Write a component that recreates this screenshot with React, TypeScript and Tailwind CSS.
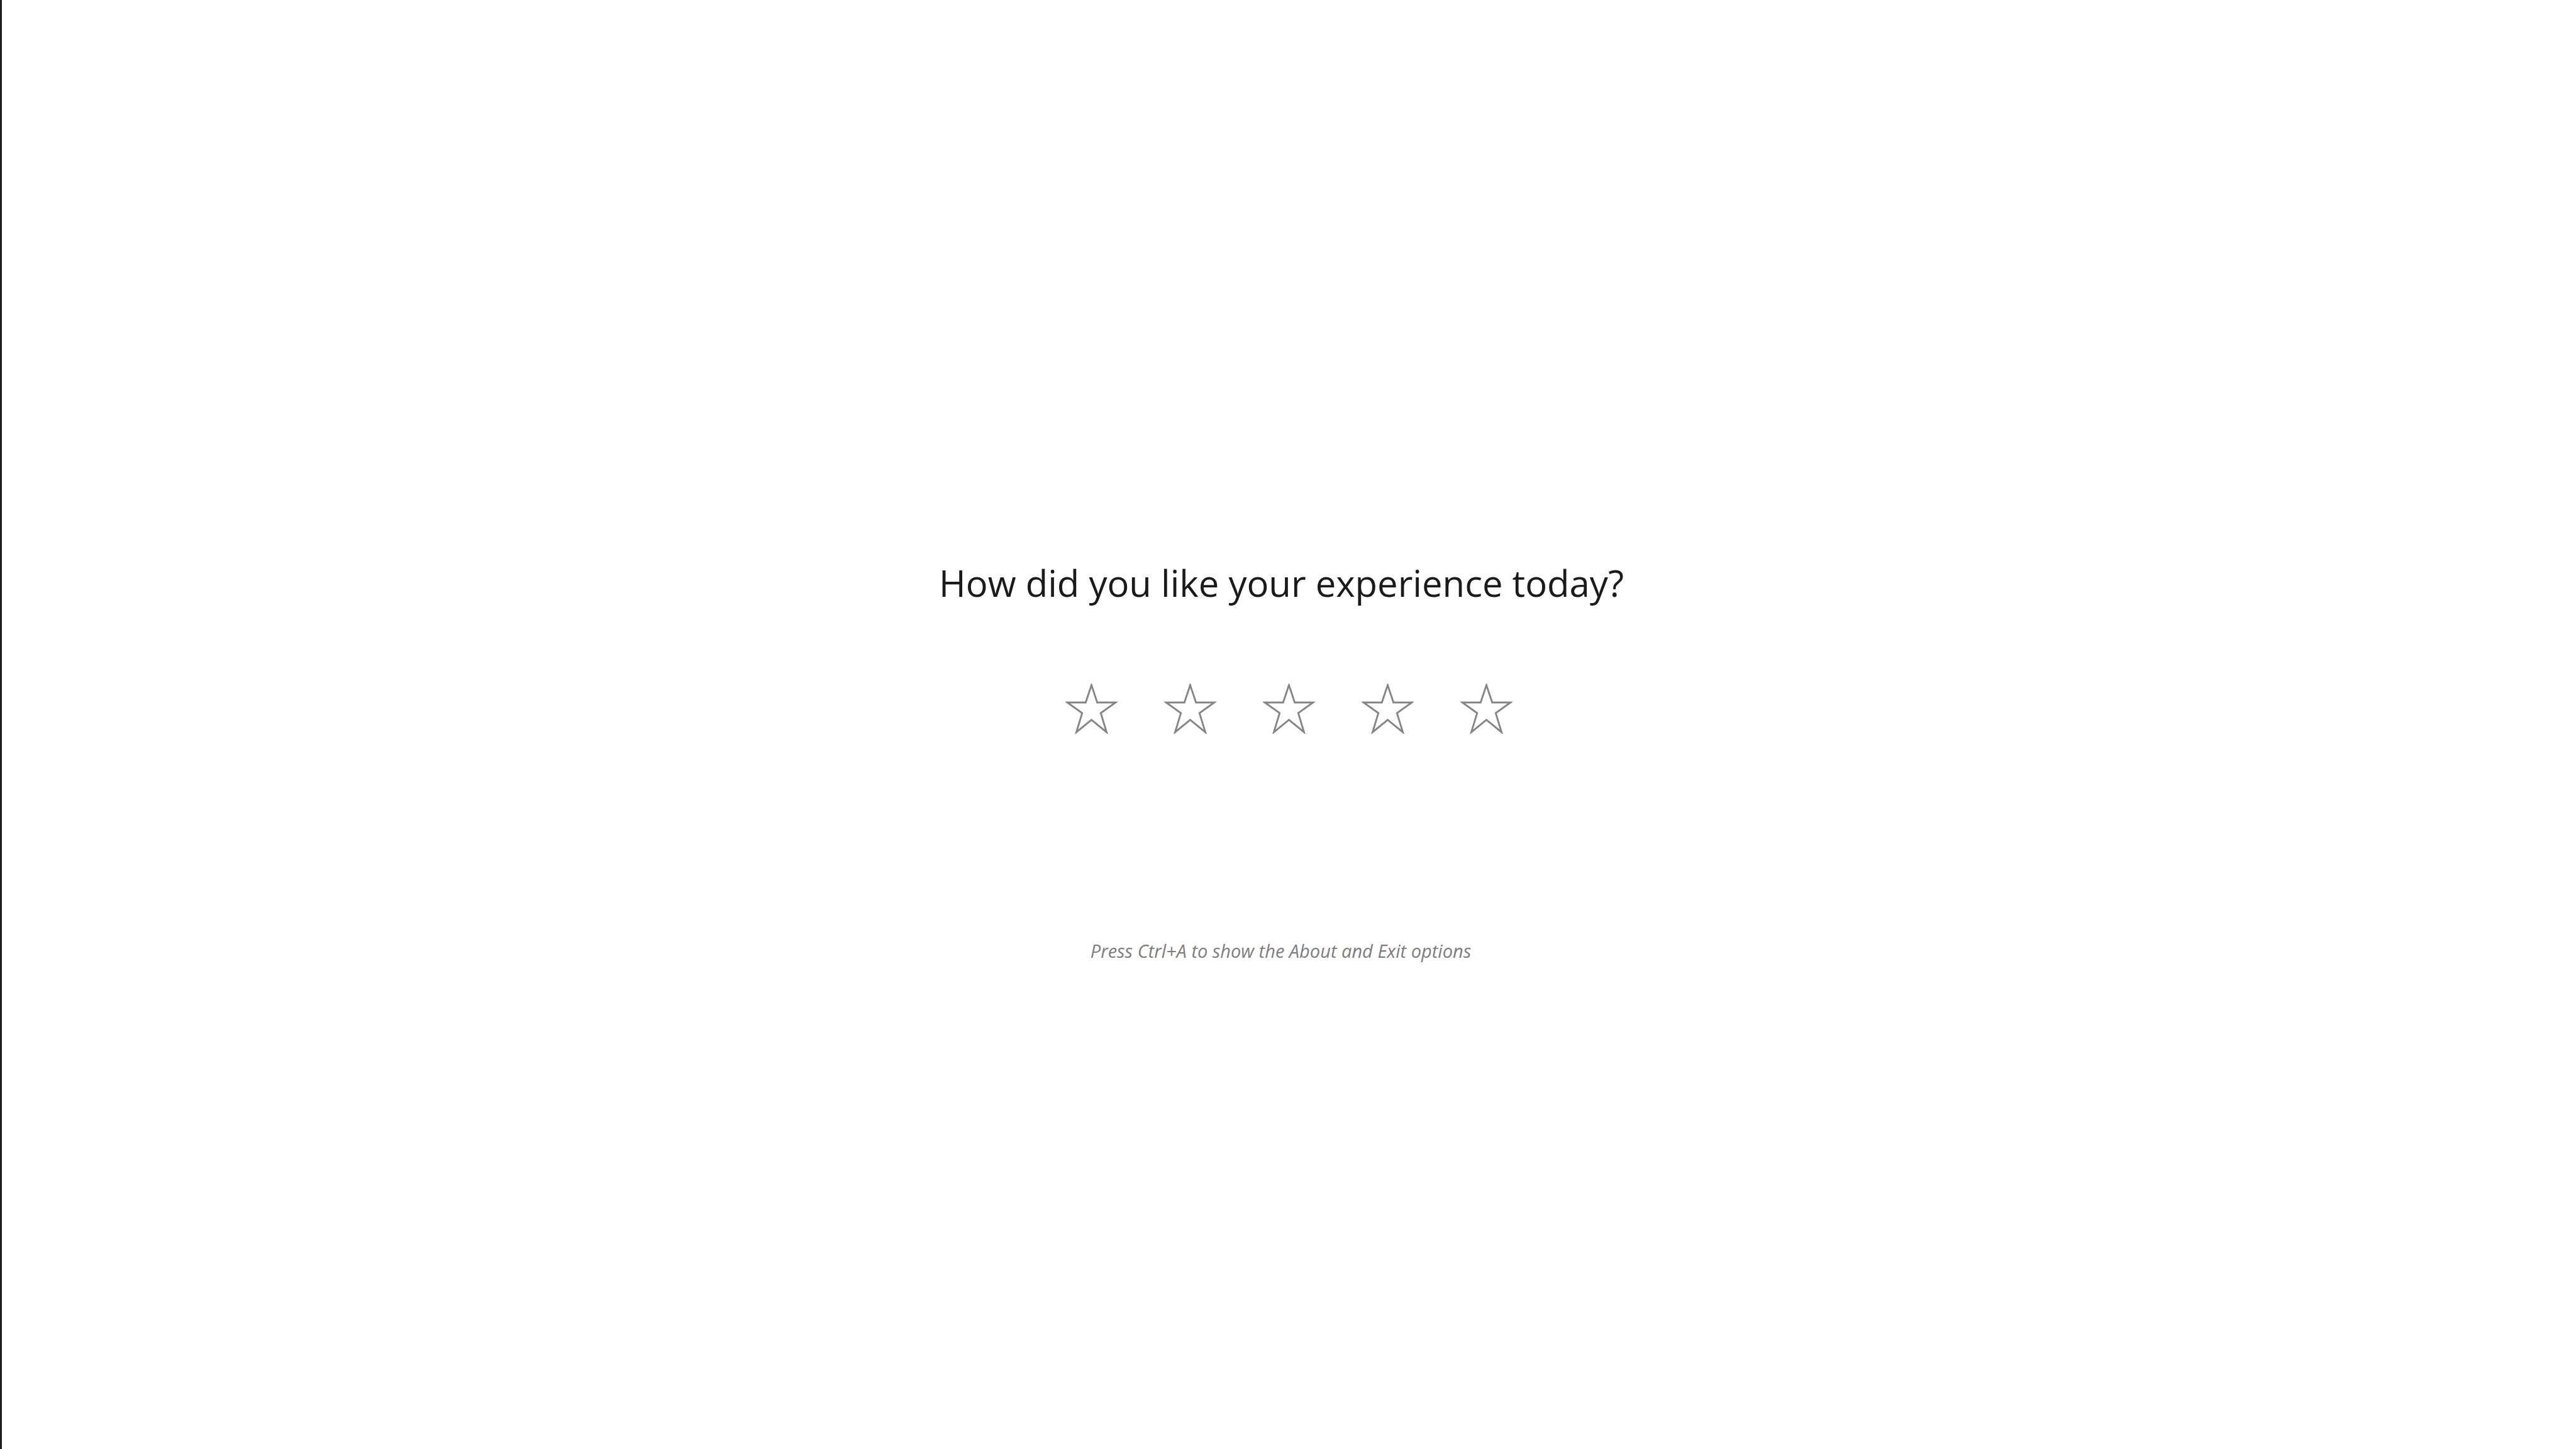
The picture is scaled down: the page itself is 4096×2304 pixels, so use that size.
const STAR_POINTS = '50,3 61.5,37.5 98,37.5 68.5,58.5 80,96.5 50,72 20,96.5 31.5,58.5 2,37.5 38.5,37.5';

function OutlineStar() {
  return (
    <svg viewBox="0 0 100 100" className="h-[80px] w-[83px]" aria-hidden="true">
      <polygon
        points={STAR_POINTS}
        fill="none"
        stroke="#858585"
        strokeWidth={3.6}
        strokeLinejoin="miter"
      />
    </svg>
  );
}

export default function App() {
  const ratings = [1, 2, 3, 4, 5];

  return (
    <div className="flex h-[2304px] w-full flex-col items-center border-l-[3px] border-[#1c1c1c] bg-white font-['Open_Sans',sans-serif]">
      <h1 className="mt-[887px] pr-[24px] text-[58px] font-normal leading-[80px] text-[#1a1a1a]">
        How did you like your experience today?
      </h1>

      <div className="mt-[120px] flex items-center gap-[74px]">
        {ratings.map((n) => (
          <button key={n} type="button" aria-label={`${n} star`} className="flex">
            <OutlineStar />
          </button>
        ))}
      </div>

      <p className="mt-[326px] pr-[26px] text-[29px] italic leading-[38px] text-[#7d7d7d]">
        Press Ctrl+A to show the About and Exit options
      </p>
    </div>
  );
}
